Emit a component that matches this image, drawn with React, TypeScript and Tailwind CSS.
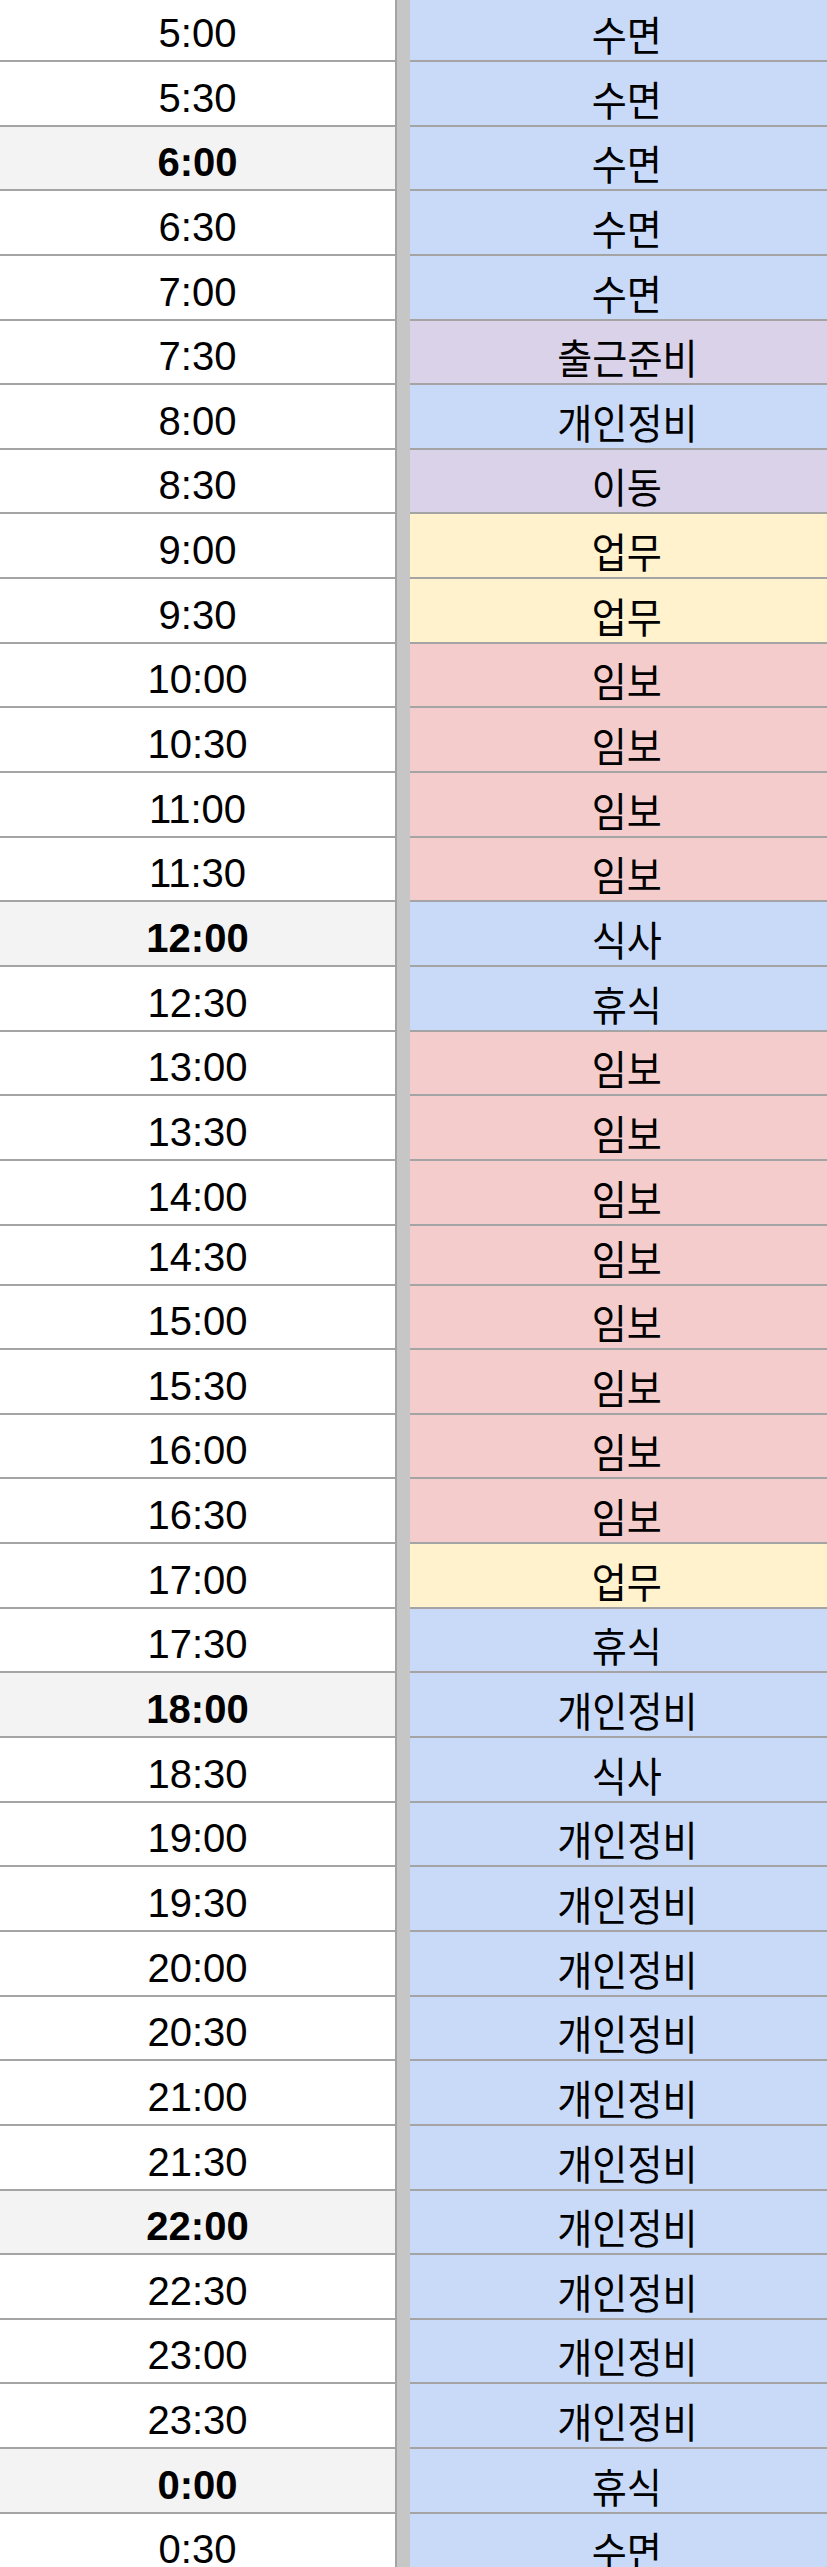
import type { FC } from 'react';

type Tone = 'blue' | 'purple' | 'yellow' | 'red';

interface Slot {
  time: string;
  task: string;
  tone: Tone;
}

const slots: Slot[] = [
  { time: '5:00', task: '수면', tone: 'blue' },
  { time: '5:30', task: '수면', tone: 'blue' },
  { time: '6:00', task: '수면', tone: 'blue' },
  { time: '6:30', task: '수면', tone: 'blue' },
  { time: '7:00', task: '수면', tone: 'blue' },
  { time: '7:30', task: '출근준비', tone: 'purple' },
  { time: '8:00', task: '개인정비', tone: 'blue' },
  { time: '8:30', task: '이동', tone: 'purple' },
  { time: '9:00', task: '업무', tone: 'yellow' },
  { time: '9:30', task: '업무', tone: 'yellow' },
  { time: '10:00', task: '임보', tone: 'red' },
  { time: '10:30', task: '임보', tone: 'red' },
  { time: '11:00', task: '임보', tone: 'red' },
  { time: '11:30', task: '임보', tone: 'red' },
  { time: '12:00', task: '식사', tone: 'blue' },
  { time: '12:30', task: '휴식', tone: 'blue' },
  { time: '13:00', task: '임보', tone: 'red' },
  { time: '13:30', task: '임보', tone: 'red' },
  { time: '14:00', task: '임보', tone: 'red' },
  { time: '14:30', task: '임보', tone: 'red' },
  { time: '15:00', task: '임보', tone: 'red' },
  { time: '15:30', task: '임보', tone: 'red' },
  { time: '16:00', task: '임보', tone: 'red' },
  { time: '16:30', task: '임보', tone: 'red' },
  { time: '17:00', task: '업무', tone: 'yellow' },
  { time: '17:30', task: '휴식', tone: 'blue' },
  { time: '18:00', task: '개인정비', tone: 'blue' },
  { time: '18:30', task: '식사', tone: 'blue' },
  { time: '19:00', task: '개인정비', tone: 'blue' },
  { time: '19:30', task: '개인정비', tone: 'blue' },
  { time: '20:00', task: '개인정비', tone: 'blue' },
  { time: '20:30', task: '개인정비', tone: 'blue' },
  { time: '21:00', task: '개인정비', tone: 'blue' },
  { time: '21:30', task: '개인정비', tone: 'blue' },
  { time: '22:00', task: '개인정비', tone: 'blue' },
  { time: '22:30', task: '개인정비', tone: 'blue' },
  { time: '23:00', task: '개인정비', tone: 'blue' },
  { time: '23:30', task: '개인정비', tone: 'blue' },
  { time: '0:00', task: '휴식', tone: 'blue' },
  { time: '0:30', task: '수면', tone: 'blue' },
];

const toneBg: Record<Tone, string> = {
  blue: 'bg-[#c9daf8]',
  purple: 'bg-[#d9d2e9]',
  yellow: 'bg-[#fff2cc]',
  red: 'bg-[#f4cccc]',
};

// hours that the sheet marks in bold with a grey cell
const markedHours = ['6:00', '12:00', '18:00', '22:00', '0:00'];

const rowHeight = (index: number) => {
  if (index === 0) return 'h-[62px]';
  if (index === 19) return 'h-[60px]';
  return 'h-[64.65px]';
};

const App: FC = () => {
  return (
    <div
      className="w-[827px] h-[2567px] overflow-hidden bg-white text-black"
      style={{ fontFamily: '"Liberation Sans", "Noto Sans CJK KR", sans-serif' }}
    >
      {slots.map((slot, i) => {
        const marked = markedHours.includes(slot.time);
        return (
          <div key={slot.time} className={`flex ${rowHeight(i)}`}>
            <div
              className={`w-[397px] shrink-0 flex items-end justify-center pb-[7px] border-b-2 border-r-2 border-[#a4a4a4] text-[40px] leading-none ${
                marked ? 'bg-[#f3f3f3] font-bold' : 'bg-white'
              }`}
            >
              {slot.time}
            </div>
            <div className="w-[13px] shrink-0 bg-[#c6c6c6]" />
            <div
              className={`w-[434px] shrink-0 flex items-end justify-center pb-[6px] border-b-2 border-[#a4a4a4] ${toneBg[slot.tone]}`}
            >
              <span
                className="inline-block text-[41px] leading-none scale-x-[0.93]"
                style={{ fontFamily: '"Noto Sans CJK KR", sans-serif' }}
              >
                {slot.task}
              </span>
            </div>
          </div>
        );
      })}
    </div>
  );
};

export default App;
